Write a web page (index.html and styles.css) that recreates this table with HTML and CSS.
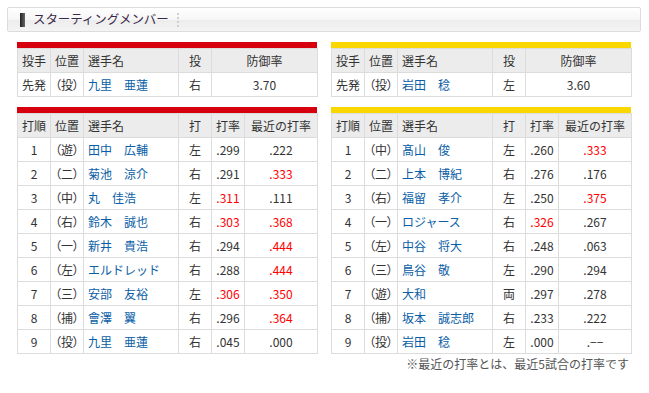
FILE: index.html
```html
<!DOCTYPE html>
<html lang="ja">
<head>
<meta charset="utf-8">
<link rel="stylesheet" href="styles.css">
</head>
<body>
<div class="page">
  <div class="title-box">
    <span class="title-mark"></span>
    <span class="title-text">スターティングメンバー</span>
    <span class="title-sep"></span>
  </div>

  <div class="pair pitchers">
    <div class="team carp">
      <div class="bar"></div>
      <table class="grid">
        <colgroup><col class="c1"><col class="c2"><col class="c3"><col class="c4"><col class="c5w"></colgroup>
        <tr class="head"><th>投手</th><th>位置</th><th class="l">選手名</th><th>投</th><th>防御率</th></tr>
        <tr><td>先発</td><td class="pos">（投）</td><td class="name">九里　亜蓮</td><td>右</td><td>3.70</td></tr>
      </table>
    </div>
    <div class="team tigers">
      <div class="bar"></div>
      <table class="grid">
        <colgroup><col class="c1"><col class="c2"><col class="c3"><col class="c4"><col class="c5w"></colgroup>
        <tr class="head"><th>投手</th><th>位置</th><th class="l">選手名</th><th>投</th><th>防御率</th></tr>
        <tr><td>先発</td><td class="pos">（投）</td><td class="name">岩田　稔</td><td>左</td><td>3.60</td></tr>
      </table>
    </div>
  </div>

  <div class="pair batters">
    <div class="team carp">
      <div class="bar"></div>
      <table class="grid">
        <colgroup><col class="c1"><col class="c2"><col class="c3"><col class="c4"><col class="c5"><col class="c6"></colgroup>
        <tr class="head"><th>打順</th><th>位置</th><th class="l">選手名</th><th>打</th><th>打率</th><th>最近の打率</th></tr>
        <tr><td>1</td><td class="pos">（遊）</td><td class="name">田中　広輔</td><td>左</td><td>.299</td><td>.222</td></tr>
        <tr><td>2</td><td class="pos">（二）</td><td class="name">菊池　涼介</td><td>右</td><td>.291</td><td class="hot">.333</td></tr>
        <tr><td>3</td><td class="pos">（中）</td><td class="name">丸　佳浩</td><td>左</td><td class="hot">.311</td><td>.111</td></tr>
        <tr><td>4</td><td class="pos">（右）</td><td class="name">鈴木　誠也</td><td>右</td><td class="hot">.303</td><td class="hot">.368</td></tr>
        <tr><td>5</td><td class="pos">（一）</td><td class="name">新井　貴浩</td><td>右</td><td>.294</td><td class="hot">.444</td></tr>
        <tr><td>6</td><td class="pos">（左）</td><td class="name">エルドレッド</td><td>右</td><td>.288</td><td class="hot">.444</td></tr>
        <tr><td>7</td><td class="pos">（三）</td><td class="name">安部　友裕</td><td>左</td><td class="hot">.306</td><td class="hot">.350</td></tr>
        <tr><td>8</td><td class="pos">（捕）</td><td class="name">會澤　翼</td><td>右</td><td>.296</td><td class="hot">.364</td></tr>
        <tr><td>9</td><td class="pos">（投）</td><td class="name">九里　亜蓮</td><td>右</td><td>.045</td><td>.000</td></tr>
      </table>
    </div>
    <div class="team tigers">
      <div class="bar"></div>
      <table class="grid">
        <colgroup><col class="c1"><col class="c2"><col class="c3"><col class="c4"><col class="c5"><col class="c6"></colgroup>
        <tr class="head"><th>打順</th><th>位置</th><th class="l">選手名</th><th>打</th><th>打率</th><th>最近の打率</th></tr>
        <tr><td>1</td><td class="pos">（中）</td><td class="name">髙山　俊</td><td>左</td><td>.260</td><td class="hot">.333</td></tr>
        <tr><td>2</td><td class="pos">（二）</td><td class="name">上本　博紀</td><td>右</td><td>.276</td><td>.176</td></tr>
        <tr><td>3</td><td class="pos">（右）</td><td class="name">福留　孝介</td><td>左</td><td>.250</td><td class="hot">.375</td></tr>
        <tr><td>4</td><td class="pos">（一）</td><td class="name">ロジャース</td><td>右</td><td class="hot">.326</td><td>.267</td></tr>
        <tr><td>5</td><td class="pos">（左）</td><td class="name">中谷　将大</td><td>右</td><td>.248</td><td>.063</td></tr>
        <tr><td>6</td><td class="pos">（三）</td><td class="name">鳥谷　敬</td><td>左</td><td>.290</td><td>.294</td></tr>
        <tr><td>7</td><td class="pos">（遊）</td><td class="name">大和</td><td>両</td><td>.297</td><td>.278</td></tr>
        <tr><td>8</td><td class="pos">（捕）</td><td class="name">坂本　誠志郎</td><td>右</td><td>.233</td><td>.222</td></tr>
        <tr><td>9</td><td class="pos">（投）</td><td class="name">岩田　稔</td><td>左</td><td>.000</td><td>.−−</td></tr>
      </table>
    </div>
  </div>

  <p class="note">※最近の打率とは、最近5試合の打率です</p>
</div>
</body>
</html>
```

FILE: styles.css
```css
* { box-sizing: border-box; }
html, body { margin: 0; padding: 0; background: #fff; }
body {
  font-family: "Noto Sans CJK JP", "Noto Sans", sans-serif;
  font-size: 12px;
  color: #333;
}
.page { padding: 7px 9px 0 7px; width: 649px; }

.title-box {
  display: flex;
  align-items: center;
  height: 25px;
  width: 634px;
  border: 1px solid #dcdcdc;
  border-radius: 2px;
  background: linear-gradient(#ffffff, #f6f6f6 50%, #ececec 51%, #f4f4f4);
  padding-left: 12px;
}
.title-mark {
  width: 5px;
  height: 14px;
  background: linear-gradient(90deg, #222, #666);
  margin-right: 8px;
}
.title-text {
  font-size: 12.5px;
  color: #3a2a4a;
  letter-spacing: -0.1px;
  line-height: 1;
}
.title-sep {
  width: 0;
  height: 14px;
  border-left: 2px dotted #cfcfcf;
  margin-left: 8px;
}

.pair {
  display: flex;
  gap: 14px;
  padding-left: 10px;
}
.pitchers { margin-top: 10px; }
.batters { margin-top: 10px; }
.team { width: 300px; }
.bar { height: 6px; }
.carp .bar { background: #d7000f; }
.tigers .bar { background: #fbd700; }

.grid {
  width: 300px;
  table-layout: fixed;
  border-collapse: collapse;
}
.c1, .c2, .c4, .c5 { width: 33px; }
.c3 { width: 95px; }
.c5w { width: 106px; }
.c6 { width: 73px; }

.grid th, .grid td {
  border: 1px solid #dcdcdc;
  height: 24px;
  padding: 0;
  text-align: center;
  font-weight: normal;
  white-space: nowrap;
  line-height: 1;
  overflow: hidden;
}
.grid .head th { background: #ececec; color: #333; }
.grid th.l { text-align: left; padding-left: 4px; }
.grid td.pos { font-feature-settings: "palt"; }
.grid td.name { text-align: left; padding-left: 4px; color: #0a5ea6; }
.grid td.hot { color: #f00; }

.note {
  margin: 0;
  width: 622px;
  text-align: right;
  color: #555;
  font-size: 12px;
  line-height: 20px;
}
```
